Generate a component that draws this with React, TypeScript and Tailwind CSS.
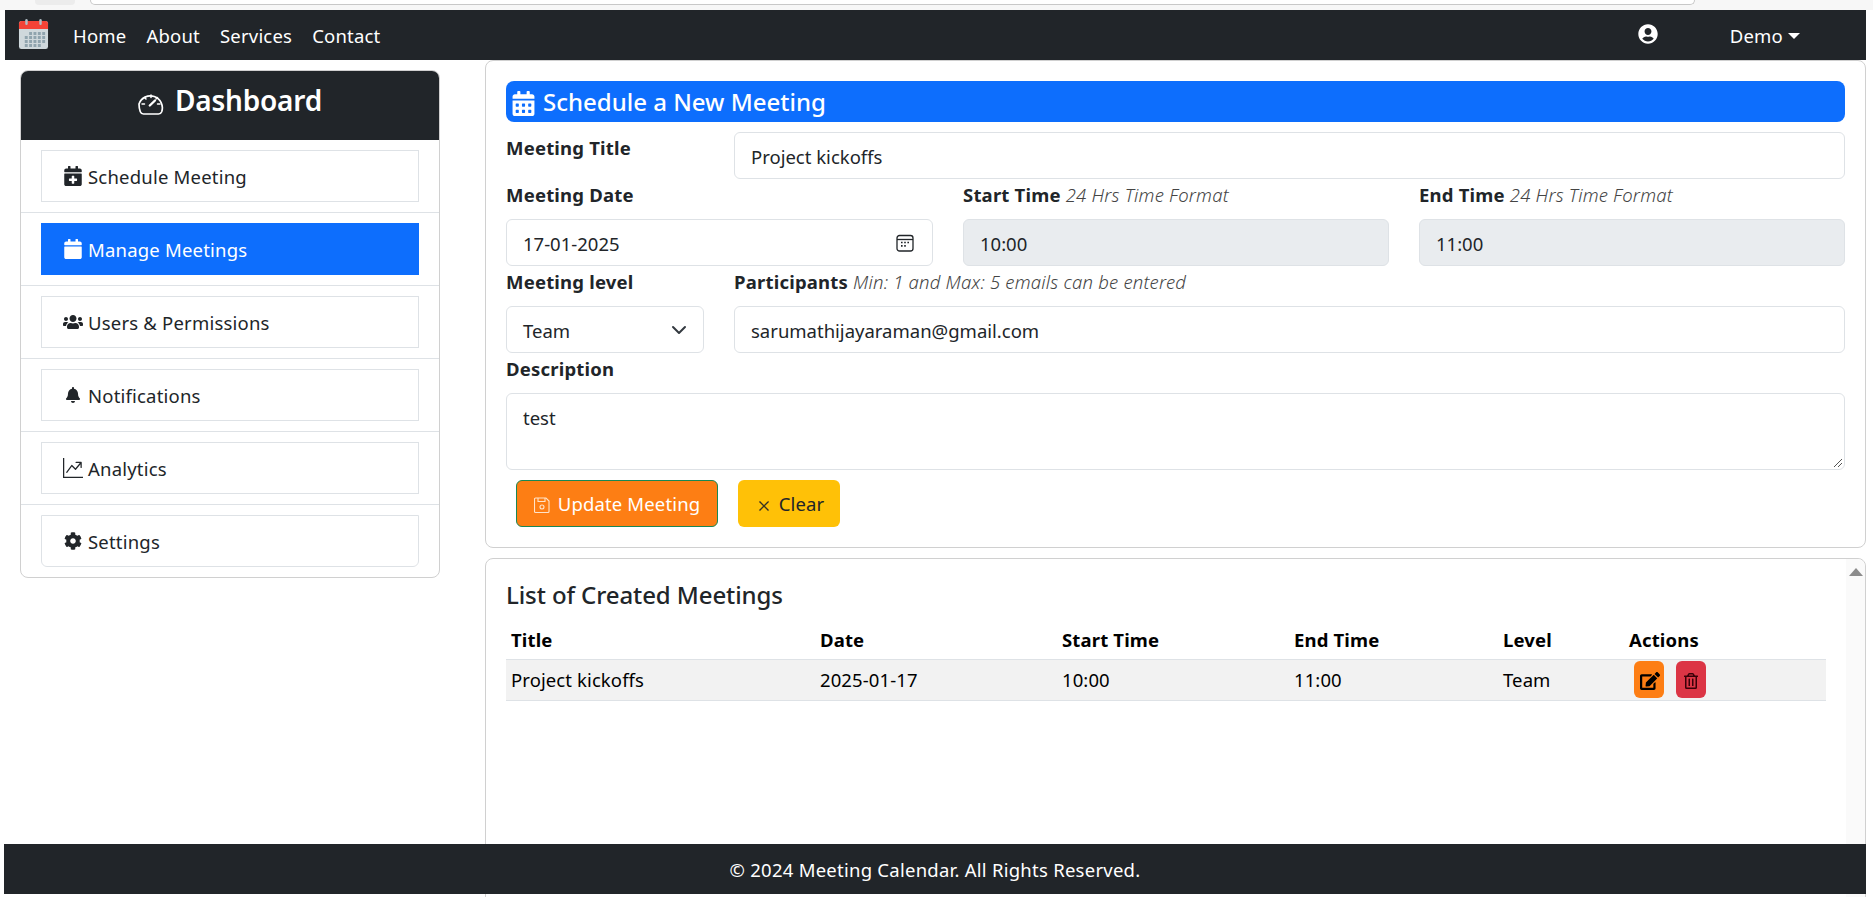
import { BsGraphUpArrow, BsXLg } from "react-icons/bs";
import {
  FaBell,
  FaCalendar,
  FaCalendarAlt,
  FaCalendarPlus,
  FaCog,
  FaEdit,
  FaRegTrashAlt,
  FaUserCircle,
  FaUsers,
} from "react-icons/fa";
import type { ReactNode } from "react";

const menu = [
  { label: "Schedule Meeting", icon: <FaCalendarPlus size={20} /> },
  { label: "Manage Meetings", icon: <FaCalendar size={20} />, active: true },
  { label: "Users & Permissions", icon: <FaUsers size={20} /> },
  { label: "Notifications", icon: <FaBell size={16} /> },
  { label: "Analytics", icon: <BsGraphUpArrow size={20} /> },
  { label: "Settings", icon: <FaCog size={18} /> },
];

function Logo() {
  return (
    <svg width="31" height="32" viewBox="0 0 32 32" preserveAspectRatio="none" className="shrink-0">
      <rect x="1" y="3" width="30" height="28" rx="2.5" fill="#cfd8dc" />
      <path d="M1 11V5.5A2.5 2.5 0 0 1 3.500 3h25A2.500 2.500 0 0 1 31 5.500V11z" fill="#f44336" />
      <rect x="7.500" y="1" width="2.500" height="6" rx="1.200" fill="#b0bec5" />
      <rect x="22" y="1" width="2.500" height="6" rx="1.200" fill="#b0bec5" />
      {[14, 18, 22, 26].map((y) =>
        [7, 11.500, 16, 20.500, 25].slice(y === 14 ? 1 : 0, y === 26 ? 4 : 5).map((x) => (
          <rect key={`${x}-${y}`} x={x} y={y} width="3" height="3" fill="#90a4ae" />
        )),
      )}
    </svg>
  );
}

function Gauge() {
  return (
    <svg width="26" height="24" viewBox="0 0 26 24" fill="none" stroke="white" strokeLinecap="round" className="mt-[7px]">
      <path d="M5.500 23h15a3.500 3.500 0 0 0 3.200-2.200A12 12 0 1 0 1 13c0 2.700.4 5.400 1.300 7.800A3.500 3.500 0 0 0 5.500 23z" strokeWidth="1.700" />
      <path d="M13 4v2.500M6.500 6.500l1.500 1.500M19.500 6.500 18 8M4 13h2.500M22 13h-2.500" strokeWidth="1.500" />
      <path d="M11.800 14.500 17 9.500" strokeWidth="2.400" />
    </svg>
  );
}

function DateIcon() {
  return (
    <svg width="18" height="18" viewBox="0 0 18 18" fill="none" stroke="#212529" strokeWidth="1.300">
      <rect x="1" y="1.500" width="16" height="15.500" rx="2.500" />
      <path d="M1 5.500h16" />
      <path d="M5 8.500h1.600M8.200 8.500h1.600M11.400 8.500h1.600M5 11.800h1.600M8.200 11.800h1.600" strokeWidth="1.700" />
    </svg>
  );
}

function SaveIcon() {
  return (
    <svg width="16" height="17" viewBox="0 0 16 17" fill="none" stroke="#ffe3c9" strokeWidth="1.100" className="mt-[3px]">
      <path d="M1.500 1h10.500l3 3v10.500a1 1 0 0 1-1 1H1.500a1 1 0 0 1-1-1V2a1 1 0 0 1 1-1z" />
      <path d="M4 1v3.500h7V1" />
      <circle cx="8" cy="10" r="2" />
    </svg>
  );
}

function Label({ children, hint }: { children: ReactNode; hint?: string }) {
  return (
    <div className="h-[24px] leading-[24px] font-bold tracking-[0.2px] whitespace-nowrap">
      {children}
      {hint && <em className="font-light text-[#444] tracking-[0.2px]"> {hint}</em>}
    </div>
  );
}

function Field({ value, grey, icon, className }: { value: string; grey?: boolean; icon?: ReactNode; className?: string }) {
  return (
    <div
      className={`h-[47px] flex items-center justify-between pl-[16px] pr-[18px] border border-[#dee2e6] rounded-[6px] ${grey ? "bg-[#e9ecef]" : "bg-white"} ${className ?? ""}`}
    >
      <span className="pt-[2px]">{value}</span>
      {icon}
    </div>
  );
}

export default function App() {
  return (
    <div
      className="relative h-[897px] w-[1873px] overflow-hidden bg-white text-[18.5px] text-[#212529]"
      style={{ fontFamily: '"Noto Sans", "Open Sans", sans-serif' }}
    >
      {/* browser chrome remnant */}
      <div className="h-[10px] bg-[#f7f7f7] flex items-start">
        <div className="ml-[35px] w-[40px] h-[5px] bg-[#ececec] rounded-b-[4px]" />
        <div className="ml-[15px] w-[1605px] h-[5px] bg-white border-b border-x border-[#c8c8c8] rounded-b-[10px]" />
      </div>

      <nav className="ml-[5px] w-[1861px] h-[50px] bg-[#212529] text-white flex items-center">
        <div className="ml-[13px] -mt-[3px]">
          <Logo />
        </div>
        <div className="ml-[24px] pt-[1px] flex gap-[20px] tracking-[0.2px]">
          <span>Home</span>
          <span>About</span>
          <span>Services</span>
          <span>Contact</span>
        </div>
        <FaUserCircle size={20} className="ml-auto -mt-[2px]" />
        <div className="ml-[72px] mr-[66px] pt-[1px] flex items-center tracking-[0.2px]">
          Demo
          <span className="ml-[5px] border-x-[6px] border-t-[6px] border-x-transparent border-t-white" />
        </div>
      </nav>

      <div className="flex items-start pl-[20px]">
        <aside className="mt-[10px] w-[420px] shrink-0 border border-[#d0d0d0] rounded-[8px] overflow-hidden">
          <div className="h-[69px] bg-[#212529] text-white flex items-center justify-center gap-[11px] pb-[12px]">
            <Gauge />
            <span className="text-[28px] font-semibold tracking-[-0.2px]">Dashboard</span>
          </div>
          {menu.map((item, i) => (
            <div key={item.label} className={`px-[20px] pt-[10px] ${i < 5 ? "h-[73px] border-b border-[#dee2e6]" : "h-[72px]"}`}>
              <div
                className={`h-[52px] flex items-center border tracking-[0.2px] ${i === 5 ? "rounded-b-[6px]" : ""} ${item.active ? "bg-[#0d6efd] border-[#0d6efd] text-white" : "border-[#dee2e6]"}`}
              >
                <span className="w-[20px] ml-[21px] mr-[5px] flex justify-center">{item.icon}</span>
                <span className="pt-[2px]">{item.label}</span>
              </div>
            </div>
          ))}
        </aside>

        <main className="ml-[45px] w-[1381px] flex flex-col gap-[10px]">
          <section className="h-[488px] border border-[#d0d0d0] rounded-[8px] px-[20px] pt-[20px]">
            <div className="h-[41px] bg-[#0d6efd] text-white rounded-[8px] flex items-center pl-[5px] gap-[7px] text-[24px] font-medium">
              <FaCalendarAlt size={25} className="mt-[3px]" />
              Schedule a New Meeting
            </div>

            <div className="mt-[10px] flex">
              <div className="w-[228px] pt-[4px]">
                <Label>Meeting Title</Label>
              </div>
              <Field value="Project kickoffs" className="flex-1" />
            </div>

            <div className="mt-[4px] grid grid-cols-[427px_426px_1fr] gap-x-[30px]">
              {[
                { label: "Meeting Date", value: "17-01-2025", icon: <DateIcon /> },
                { label: "Start Time", hint: "24 Hrs Time Format", value: "10:00", grey: true },
                { label: "End Time", hint: "24 Hrs Time Format", value: "11:00", grey: true },
              ].map((col) => (
                <div key={col.label}>
                  <div className="mb-[12px]">
                    <Label hint={col.hint}>{col.label}</Label>
                  </div>
                  <Field value={col.value} grey={col.grey} icon={col.icon} />
                </div>
              ))}
            </div>

            <div className="mt-[4px] flex gap-[30px]">
              <div className="w-[198px] shrink-0">
                <div className="mb-[12px]">
                  <Label>Meeting level</Label>
                </div>
                <Field
                  value="Team"
                  icon={
                    <svg width="16" height="16" viewBox="0 0 16 16" fill="none" stroke="#343a40" strokeWidth="2" strokeLinecap="round" strokeLinejoin="round" className="-mr-[2px]">
                      <path d="m2 5 6 6 6-6" />
                    </svg>
                  }
                />
              </div>
              <div className="flex-1">
                <div className="mb-[12px]">
                  <Label hint="Min: 1 and Max: 5 emails can be entered">Participants</Label>
                </div>
                <Field value="sarumathijayaraman@gmail.com" />
              </div>
            </div>

            <div className="mt-[4px] mb-[12px]">
              <Label>Description</Label>
            </div>
            <div className="relative h-[77px] border border-[#dee2e6] rounded-[6px] pl-[16px] pt-[10px]">
              test
              <svg width="12" height="12" viewBox="0 0 12 12" className="absolute right-[1px] bottom-[1px]" stroke="#555">
                <path d="M11 3 3 11M11 7l-4 4" />
              </svg>
            </div>

            <div className="mt-[10px] ml-[10px] flex gap-[20px] tracking-[0.15px]">
              <button className="h-[47px] w-[202px] pt-[1px] flex items-center justify-center gap-[8px] bg-[#fd7e14] text-white border border-[#198754] rounded-[6px]">
                <SaveIcon />
                Update Meeting
              </button>
              <button className="h-[47px] w-[102px] pt-[1px] pl-[4px] flex items-center justify-center gap-[9px] bg-[#ffc107] rounded-[6px]">
                <BsXLg size={12} stroke="currentColor" strokeWidth={0.8} className="mt-[3px]" />
                Clear
              </button>
            </div>
          </section>

          <section className="h-[400px] border border-[#d0d0d0] rounded-[8px] flex">
            <div className="flex-1 pl-[20px] pr-[19px]">
              <h2 className="mt-[18px] h-[36px] leading-[36px] text-[24px] font-medium tracking-[-0.1px]">List of Created Meetings</h2>
              <table className="mt-[6px] w-[1320px] table-fixed text-left text-black">
                <colgroup>
                  <col className="w-[309px]" />
                  <col className="w-[242px]" />
                  <col className="w-[232px]" />
                  <col className="w-[209px]" />
                  <col className="w-[126px]" />
                  <col />
                </colgroup>
                <thead>
                  <tr className="h-[40px] border-b border-[#dee2e6]">
                    {["Title", "Date", "Start Time", "End Time", "Level", "Actions"].map((h) => (
                      <th key={h} className="px-[5px] pt-[2px] font-bold tracking-[0.15px]">
                        {h}
                      </th>
                    ))}
                  </tr>
                </thead>
                <tbody>
                  <tr className="h-[41px] bg-[#f2f2f2] border-b border-[#dee2e6] tracking-[0.1px]">
                    <td className="px-[5px] pt-[1px]">Project kickoffs</td>
                    <td className="px-[5px] pt-[1px]">2025-01-17</td>
                    <td className="px-[5px] pt-[1px]">10:00</td>
                    <td className="px-[5px] pt-[1px]">11:00</td>
                    <td className="px-[5px] pt-[1px]">Team</td>
                    <td className="px-[5px]">
                      <div className="flex gap-[12px] pl-[5px]">
                        <span className="h-[37px] w-[30px] bg-[#fd7e14] rounded-[6px] flex items-center justify-center">
                          <FaEdit size={20} className="mt-[3px] ml-[2px]" />
                        </span>
                        <span className="h-[37px] w-[30px] bg-[#dc3545] rounded-[6px] flex items-center justify-center">
                          <FaRegTrashAlt size={16} className="mt-[3px] text-[#3a0008]" />
                        </span>
                      </div>
                    </td>
                  </tr>
                </tbody>
              </table>
            </div>
            <div className="w-[19px] bg-[#fafafa] rounded-tr-[8px] flex justify-center pt-[9px]">
              <span className="h-0 border-x-[7px] border-b-[8px] border-x-transparent border-b-[#8c8c8c]" />
            </div>
          </section>
        </main>
      </div>

      <footer className="absolute left-[4px] top-[844px] w-[1862px] h-[50px] pt-[1px] bg-[#212529] text-white flex items-center justify-center tracking-[0.25px]">
        © 2024 Meeting Calendar. All Rights Reserved.
      </footer>
    </div>
  );
}
